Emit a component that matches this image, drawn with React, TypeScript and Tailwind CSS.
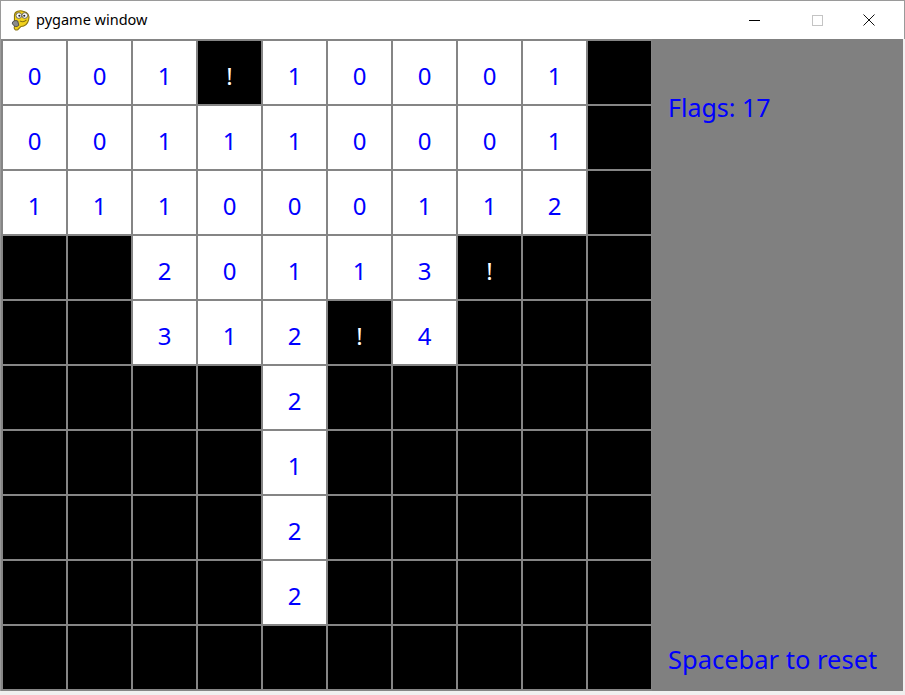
import React from "react";

// B = hidden (black), F = flagged, otherwise the revealed count
const board: string[][] = [
  ["0", "0", "1", "F", "1", "0", "0", "0", "1", "B"],
  ["0", "0", "1", "1", "1", "0", "0", "0", "1", "B"],
  ["1", "1", "1", "0", "0", "0", "1", "1", "2", "B"],
  ["B", "B", "2", "0", "1", "1", "3", "F", "B", "B"],
  ["B", "B", "3", "1", "2", "F", "4", "B", "B", "B"],
  ["B", "B", "B", "B", "2", "B", "B", "B", "B", "B"],
  ["B", "B", "B", "B", "1", "B", "B", "B", "B", "B"],
  ["B", "B", "B", "B", "2", "B", "B", "B", "B", "B"],
  ["B", "B", "B", "B", "2", "B", "B", "B", "B", "B"],
  ["B", "B", "B", "B", "B", "B", "B", "B", "B", "B"],
];

function PygameIcon() {
  return (
    <svg width="22" height="24" viewBox="0 0 20 22">
      <path d="M4 6 C4 2 9 1 12 2 C16 3 18 6 17 10 C16 14 13 16 10 16 L7 19 C5 20 3 18 4 16 Z" fill="#f2d21b" stroke="#8a7410" strokeWidth="1" />
      <circle cx="8" cy="6" r="2.6" fill="#fff" stroke="#555" strokeWidth="0.8" />
      <circle cx="13.5" cy="6" r="2.6" fill="#fff" stroke="#555" strokeWidth="0.8" />
      <circle cx="8.5" cy="6.2" r="1" fill="#222" />
      <circle cx="13" cy="6.2" r="1" fill="#222" />
      <path d="M2 13 C2 11 5 10 7 11 L8 15 C6 17 3 16 2 13 Z" fill="#8c8c8c" stroke="#444" strokeWidth="0.8" />
      <path d="M9 11 C11 12 13 12 15 10" stroke="#8a7410" strokeWidth="1" fill="none" />
    </svg>
  );
}

function TitleBar() {
  return (
    <div className="h-[39px] bg-white flex items-center border-t border-l border-r border-[#9a9a9a]">
      <div className="ml-[9px] mt-[1px]">
        <PygameIcon />
      </div>
      <span className="ml-[4px] text-[14.5px] text-black" style={{ fontFamily: '"Noto Sans", "Liberation Sans", sans-serif' }}>
        pygame window
      </span>
      <div className="ml-auto flex h-full">
        <div className="w-[46px] flex items-center justify-center">
          <div className="w-[11px] h-[1px] bg-black" />
        </div>
        <div className="w-[58px] flex items-center justify-center ml-[11px]">
          <div className="w-[11px] h-[11px] border border-[#c4c4c4]" />
        </div>
        <div className="w-[46px] flex items-center justify-center mr-[12px]">
          <svg width="12" height="12" viewBox="0 0 12 12">
            <path d="M0.5 0.5 L11.5 11.5 M11.5 0.5 L0.5 11.5" stroke="#111" strokeWidth="1" />
          </svg>
        </div>
      </div>
    </div>
  );
}

function Cell({ v }: { v: string }) {
  const hidden = v === "B" || v === "F";
  return (
    <div
      className={`w-[65px] h-[65px] border border-[#858585] flex items-center justify-center pt-[6px] text-[24px] ${
        hidden ? "bg-black text-white" : "bg-white text-[#0000ff]"
      }`}
    >
      {v === "B" ? "" : v === "F" ? "!" : v}
    </div>
  );
}

export default function App() {
  return (
    <div className="w-[905px] h-[695px] bg-[#f0f0f0] flex flex-col" style={{ fontFamily: '"Noto Sans", "DejaVu Sans", sans-serif' }}>
      <TitleBar />
      <div className="flex h-[652px] w-[903px] border-l border-[#9a9a9a]">
        <div className="bg-[#858585] flex flex-col w-[651px] h-[652px] pl-[1px] pt-[1px] border-b border-[#858585]">
          {board.map((row, r) => (
            <div key={r} className="flex">
              {row.map((v, c) => (
                <Cell key={c} v={v} />
              ))}
            </div>
          ))}
        </div>
        <div className="flex-1 bg-[#808080] flex flex-col justify-between pl-[16px] pt-[50px] pb-[13px]">
          <div className="text-[25px] text-[#0000ff]">Flags: 17</div>
          <div className="text-[25.5px] text-[#0000ff]">Spacebar to reset</div>
        </div>
      </div>
    </div>
  );
}
